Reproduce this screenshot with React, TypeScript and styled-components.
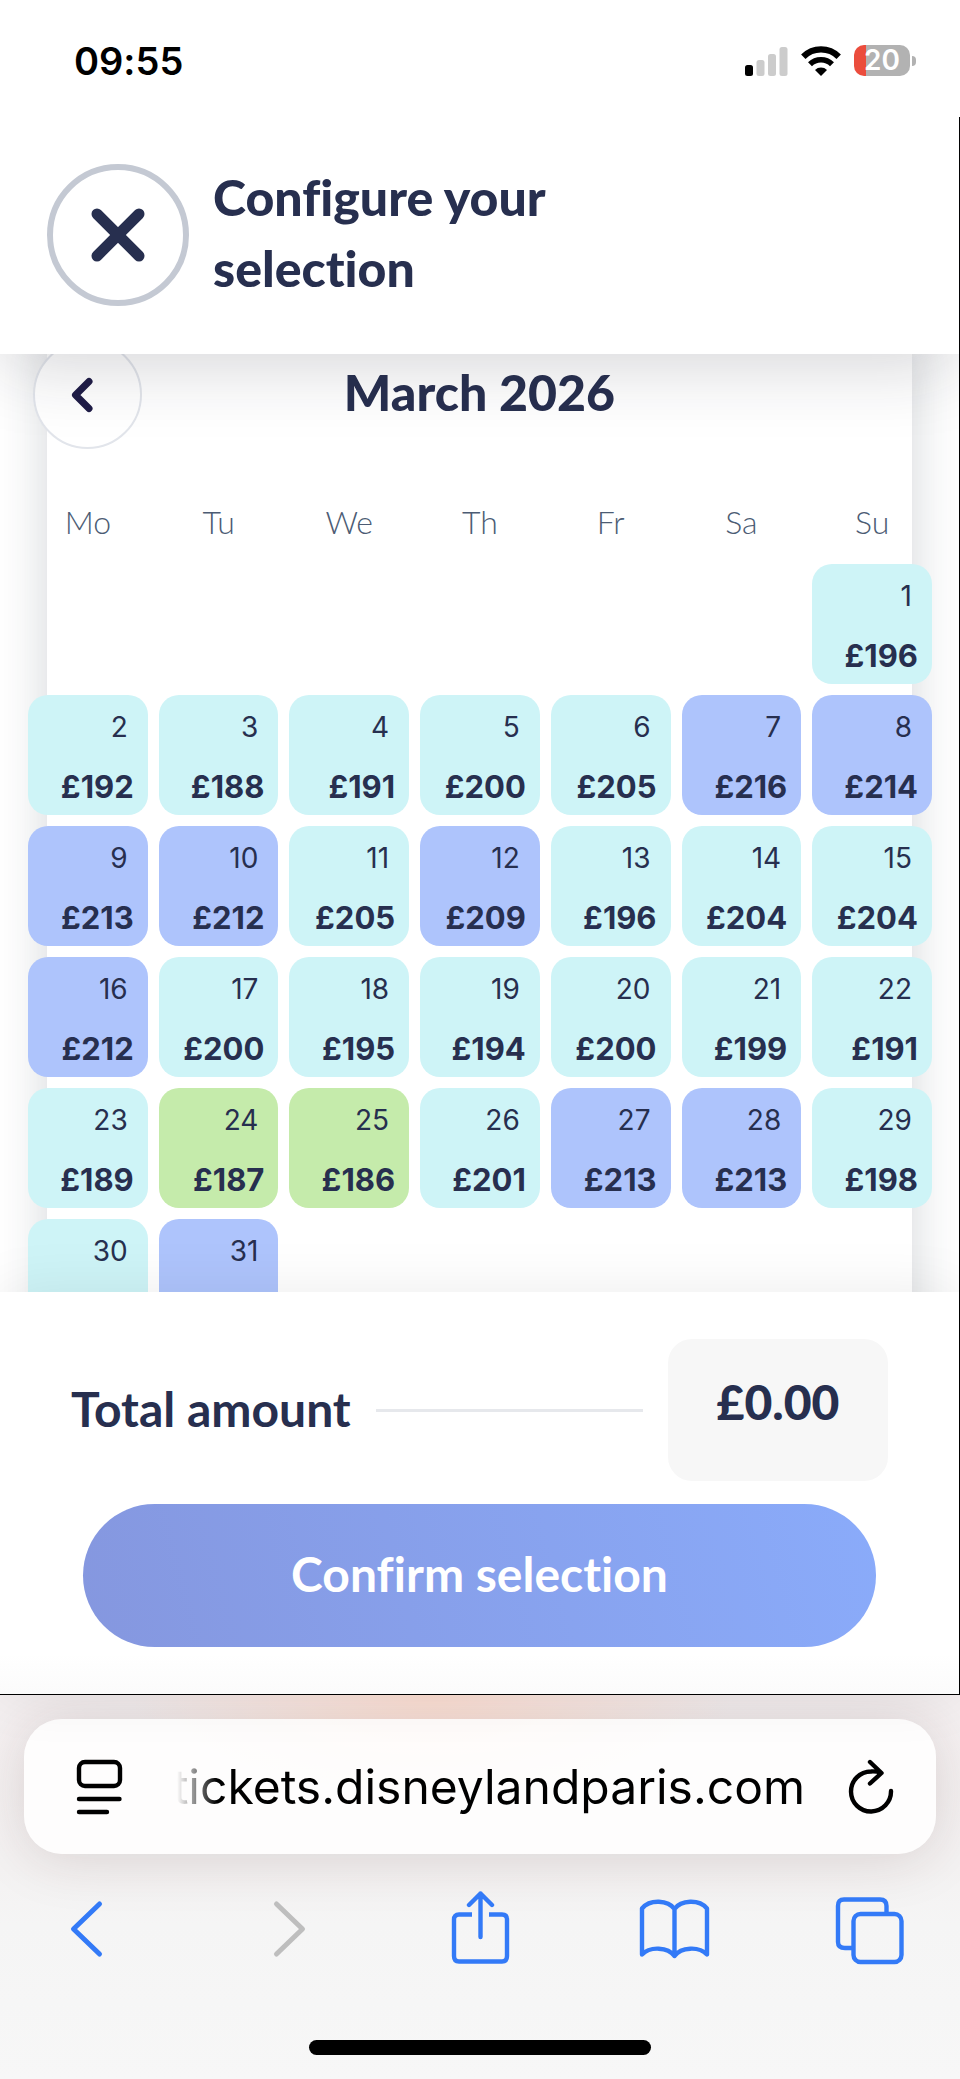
import React from "react";
import styled, { createGlobalStyle } from "styled-components";

const NAVY = "#272f4f";
const BLUE = "#337af7";
const DISPLAY = `Lato, "Open Sans", sans-serif`;
const SYSTEM = `Inter, "Liberation Sans", sans-serif`;

const GlobalStyle = createGlobalStyle`
  *, *::before, *::after { box-sizing: border-box; }
  body {
    margin: 0;
    background: #fff;
    color: ${NAVY};
    font-family: ${DISPLAY};
    font-variant-ligatures: none;
  }
  button { margin: 0; padding: 0; border: 0; background: none; font: inherit; color: inherit; }
  svg { display: block; }
`;

const Screen = styled.div`
  display: flex;
  flex-direction: column;
  height: 100vh;
  overflow: hidden;
`;

/* Status bar */
const StatusBar = styled.div`
  position: relative;
  z-index: 2;
  display: flex;
  flex: none;
  align-items: center;
  justify-content: space-between;
  height: 117px;
  padding: 0 44px 0 74px;
  background: #fff;
  color: #000;
  font-family: ${SYSTEM};
`;

const Clock = styled.time`
  padding-top: 4px;
  font-size: 38px;
  font-weight: 600;
  line-height: 44px;
`;

const StatusIcons = styled.div`
  display: flex;
  align-items: center;
  gap: 13px;
  padding-top: 4px;
`;

const Battery = styled.div`
  display: flex;
  align-items: center;
  gap: 2px;
`;

const BatteryBody = styled.div`
  width: 56px;
  border-radius: 10px;
  background: linear-gradient(to right, #eb4d3d 12px, #b2b2b2 12px);
  color: #fff;
  font-size: 28px;
  font-weight: 600;
  line-height: 31px;
  text-align: center;
`;

const BatteryTip = styled.div`
  width: 4px;
  height: 10px;
  border-radius: 0 6px 6px 0;
  background: #b2b2b2;
`;

/* Web page */
const WebPage = styled.div`
  display: flex;
  flex: 1;
  flex-direction: column;
  min-height: 0;
  border-right: 1px solid #000;
  border-bottom: 1px solid #000;
`;

const Header = styled.header`
  position: relative;
  z-index: 1;
  display: flex;
  flex: none;
  align-items: flex-start;
  gap: 24px;
  padding: 47px 47px 48px;
  background: #fff;
  box-shadow: 0 8px 72px rgba(30, 32, 44, 0.2);
`;

const CloseButton = styled.button`
  display: grid;
  place-items: center;
  width: 142px;
  height: 142px;
  border: 6px solid #c4c9d3;
  border-radius: 50%;
`;

const Title = styled.h1`
  max-width: 400px;
  margin: -2px 0 0;
  font-size: 50px;
  font-weight: 900;
  line-height: 71px;
`;

const ScrollArea = styled.main`
  flex: 1;
  min-height: 0;
  overflow: hidden;
`;

const Card = styled.section`
  margin: -14px 47px 0;
  min-height: 110%;
  background: #fff;
  box-shadow: 0 0 48px rgba(36, 48, 64, 0.2);
`;

const MonthNav = styled.div`
  display: grid;
  grid-template-columns: 110px 1fr 110px;
  align-items: center;
  margin: 0 -14px 31px;
`;

const PrevButton = styled.button`
  display: grid;
  place-items: center;
  width: 109px;
  height: 109px;
  padding-right: 12px;
  border: 2px solid #e2e5eb;
  border-radius: 50%;
  background: #fff;
`;

const MonthTitle = styled.h2`
  margin: 0;
  padding-bottom: 6px;
  font-size: 50px;
  font-weight: 900;
  line-height: 56px;
  text-align: center;
`;

const Calendar = styled.table`
  width: calc(100% + 61px);
  margin: 0 -30px;
  border-spacing: 11px;
  table-layout: fixed;

  th, td { padding: 0; }
`;

const Weekday = styled.th`
  height: 62px;
  color: #4c5c74;
  font-size: 32px;
  font-weight: 300;
  line-height: 40px;
`;

type Tier = "low" | "mid" | "high";
const tierColor: Record<Tier, string> = { low: "#c5ebab", mid: "#cef4f7", high: "#aec4fc" };

const Day = styled.button<{ $tier: Tier }>`
  display: flex;
  flex-direction: column;
  align-items: flex-end;
  justify-content: flex-start;
  gap: 26px;
  width: 100%;
  height: 120px;
  padding: 15px 14px 0 0;
  border-radius: 20px;
  background: ${(p) => tierColor[p.$tier]};
  font-family: ${SYSTEM};
`;

const DayNumber = styled.span`
  padding-right: 6px;
  font-size: 28px;
  line-height: 34px;
`;

const Price = styled.span`
  font-size: 31px;
  font-weight: 700;
  line-height: 34px;
`;

/* Total and confirmation */
const Footer = styled.footer`
  position: relative;
  z-index: 1;
  flex: none;
  padding: 47px 71px;
  background: linear-gradient(#fff 90%, #fbfbfb);
  box-shadow: 0 0 56px rgba(0, 0, 0, 0.08);
`;

const TotalRow = styled.div`
  display: flex;
  align-items: center;
  gap: 25px;
`;

const TotalLabel = styled.span`
  padding-bottom: 2px;
  font-size: 48px;
  font-weight: 700;
  line-height: 56px;
`;

const Rule = styled.div`
  flex: 1;
  height: 3px;
  background: #e6e8ec;
`;

const TotalAmount = styled.output`
  display: flex;
  align-items: center;
  justify-content: center;
  width: 220px;
  height: 142px;
  padding-bottom: 18px;
  border-radius: 24px;
  background: #f7f7f7;
  font-size: 48px;
  font-weight: 900;
`;

const ConfirmButton = styled.button`
  display: block;
  width: calc(100% - 24px);
  height: 143px;
  margin: 23px 12px 0;
  padding-bottom: 4px;
  border-radius: 72px;
  background: linear-gradient(75deg, #8597df, #8aabfa);
  color: #fff;
  font-size: 48px;
  font-weight: 700;
`;

/* Browser controls */
const BrowserBar = styled.div`
  flex: none;
  padding: 24px;
  background:
    radial-gradient(ellipse 300px 110px at 45% 0, #ffe2d6, rgba(255, 226, 214, 0)),
    linear-gradient(#f5f0f1, #f4f2f2 45%, #f5f5f5 60%, #f7f7f7);
`;

const AddressBar = styled.div`
  display: flex;
  align-items: center;
  height: 135px;
  padding: 0 42px 0 52px;
  border-radius: 38px;
  background: rgba(255, 255, 255, 0.84);
  box-shadow: 0 4px 56px rgba(60, 30, 30, 0.15);
  color: #000;
`;

const Address = styled.a`
  display: flex;
  flex: 1;
  justify-content: flex-end;
  min-width: 0;
  margin: 0 43px 0 28px;
  color: inherit;
  font-family: ${SYSTEM};
  font-size: 48px;
  line-height: 64px;
  white-space: nowrap;
  text-decoration: none;
  mask-image: linear-gradient(to right, transparent 26px, #000 66px);
`;

const Toolbar = styled.nav`
  display: flex;
  justify-content: space-between;
  margin: 37px 30px 75px 26px;
  color: ${BLUE};
`;

const ToolButton = styled.button`
  color: inherit;

  &:disabled { color: #bebebe; }
`;

const HomeIndicator = styled.div`
  width: 342px;
  height: 15px;
  margin: 0 auto;
  border-radius: 8px;
  background: #000;
`;

const line = {
  fill: "none",
  stroke: "currentColor",
  strokeWidth: 4.4,
  strokeLinecap: "round",
  strokeLinejoin: "round",
} as const;

const SignalIcon = () => (
  <svg width="43" height="30" viewBox="0 0 43 30" aria-label="Signal">
    <rect x="0" y="19" width="8" height="11" rx="2.5" fill="#000" />
    <rect x="11.500" y="14" width="8" height="16" rx="2.500" fill="#ccc" />
    <rect x="23" y="8" width="8" height="22" rx="2.500" fill="#ccc" />
    <rect x="34.500" y="1" width="8" height="29" rx="2.500" fill="#ccc" />
  </svg>
);

const WifiIcon = () => (
  <svg width="40" height="30" viewBox="0 0 40 30" aria-label="Wi-Fi">
    <path d="M2.300 10.800a25 25 0 0 1 35.400 0" fill="none" stroke="#000" strokeWidth="6.200" />
    <path d="M9 18.300a15.600 15.600 0 0 1 22 0" fill="none" stroke="#000" strokeWidth="5.600" />
    <path d="M14 24a8.500 8.500 0 0 1 12 0L20 30Z" fill="#000" />
  </svg>
);

const CloseIcon = () => (
  <svg width="56" height="56" viewBox="0 0 56 56">
    <path d="M7 7l42 42M49 7L7 49" fill="none" stroke={NAVY} strokeWidth="11" strokeLinecap="round" />
  </svg>
);

const PrevIcon = () => (
  <svg width="24" height="36" viewBox="0 0 24 36">
    <path d="M19 4.500L5.500 18L19 31.500" fill="none" stroke="#1f1c47" strokeWidth="7" strokeLinecap="round" strokeLinejoin="round" />
  </svg>
);

const PageMenuIcon = () => (
  <svg width="47" height="56" viewBox="0 0 47 56">
    <g {...line}>
      <rect x="3" y="3" width="41" height="24" rx="6" />
      <path d="M3 40H43.500M3 53H31" />
    </g>
  </svg>
);

const ReloadIcon = () => (
  <svg width="46" height="56" viewBox="0 0 46 56">
    <path {...line} d="M43 32A20 20 0 1 1 23 12.500Q28 12 33 14M22 3L33.500 14L22 24.500" />
  </svg>
);

const icon = { width: 72, height: 74, viewBox: "0 0 72 74" };

const BackIcon = () => (
  <svg {...icon}>
    <path {...line} strokeWidth="5" d="M49.500 13L23.500 38L49.500 63" />
  </svg>
);

const ForwardIcon = () => (
  <svg {...icon}>
    <path {...line} strokeWidth="5" d="M30.500 13L56.500 38L30.500 63" />
  </svg>
);

const ShareIcon = () => (
  <svg {...icon}>
    <path {...line} strokeLinecap="butt" d="M30 23.500H17Q12 23.500 12 28.500V65Q12 70.500 17 70.500H60Q65 70.500 65 65V28.500Q65 23.500 60 23.500H47" />
    <path {...line} d="M38.500 46V2.500M27 14L38.500 2.500L50 14" />
  </svg>
);

const BookIcon = () => (
  <svg {...icon}>
    <path {...line} d="M36.500 18C30 9 12 8 4 17.500V63.500C12 55 30 56 36.500 65C43 56 61 55 69 63.500V17.500C61 8 43 9 36.500 18V65" />
  </svg>
);

const TabsIcon = () => (
  <svg {...icon}>
    <path {...line} strokeLinecap="butt" d="M19 57H11Q4 57 4 51V15Q4 8.500 10 8.500H46Q52.500 8.500 52.500 15V23" />
    <rect {...line} x="19.500" y="23" width="48" height="48" rx="7" />
  </svg>
);

const weekdays = ["Mo", "Tu", "We", "Th", "Fr", "Sa", "Su"];

const prices = [
  196, 192, 188, 191, 200, 205, 216, 214, 213, 212, 205, 209, 196, 204, 204,
  212, 200, 195, 194, 200, 199, 191, 189, 187, 186, 201, 213, 213, 198,
];
const DAYS_IN_MONTH = 31;
const LEADING_BLANKS = 6;
const unpriced: Record<number, Tier> = { 30: "mid", 31: "high" };

const tierOf = (day: number): Tier => {
  const price = prices[day - 1];
  if (price === undefined) return unpriced[day];
  if (price < 188) return "low";
  return price > 205 ? "high" : "mid";
};

const weeks = Array.from({ length: 6 }, (_, week) =>
  Array.from({ length: 7 }, (_, column) => week * 7 + column - LEADING_BLANKS + 1),
);

export default function App() {
  return (
    <Screen>
      <GlobalStyle />
      <StatusBar>
        <Clock>09:55</Clock>
        <StatusIcons>
          <SignalIcon />
          <WifiIcon />
          <Battery>
            <BatteryBody>20</BatteryBody>
            <BatteryTip />
          </Battery>
        </StatusIcons>
      </StatusBar>

      <WebPage>
        <Header>
          <CloseButton aria-label="Close"><CloseIcon /></CloseButton>
          <Title>Configure your selection</Title>
        </Header>

        <ScrollArea>
          <Card>
            <MonthNav>
              <PrevButton aria-label="Previous month"><PrevIcon /></PrevButton>
              <MonthTitle>March 2026</MonthTitle>
            </MonthNav>
            <Calendar>
              <thead>
                <tr>{weekdays.map((name) => <Weekday key={name} scope="col">{name}</Weekday>)}</tr>
              </thead>
              <tbody>
                {weeks.map((days, week) => (
                  <tr key={week}>
                    {days.map((day) => (
                      <td key={day}>
                        {day > 0 && day <= DAYS_IN_MONTH && (
                          <Day $tier={tierOf(day)}>
                            <DayNumber>{day}</DayNumber>
                            {prices[day - 1] && <Price>£{prices[day - 1]}</Price>}
                          </Day>
                        )}
                      </td>
                    ))}
                  </tr>
                ))}
              </tbody>
            </Calendar>
          </Card>
        </ScrollArea>

        <Footer>
          <TotalRow>
            <TotalLabel>Total amount</TotalLabel>
            <Rule />
            <TotalAmount>£0.00</TotalAmount>
          </TotalRow>
          <ConfirmButton>Confirm selection</ConfirmButton>
        </Footer>
      </WebPage>

      <BrowserBar>
        <AddressBar>
          <button aria-label="Page menu"><PageMenuIcon /></button>
          <Address href="#">tickets.disneylandparis.com</Address>
          <button aria-label="Reload"><ReloadIcon /></button>
        </AddressBar>
        <Toolbar>
          <ToolButton aria-label="Back"><BackIcon /></ToolButton>
          <ToolButton aria-label="Forward" disabled><ForwardIcon /></ToolButton>
          <ToolButton aria-label="Share"><ShareIcon /></ToolButton>
          <ToolButton aria-label="Bookmarks"><BookIcon /></ToolButton>
          <ToolButton aria-label="Tabs"><TabsIcon /></ToolButton>
        </Toolbar>
        <HomeIndicator />
      </BrowserBar>
    </Screen>
  );
}
